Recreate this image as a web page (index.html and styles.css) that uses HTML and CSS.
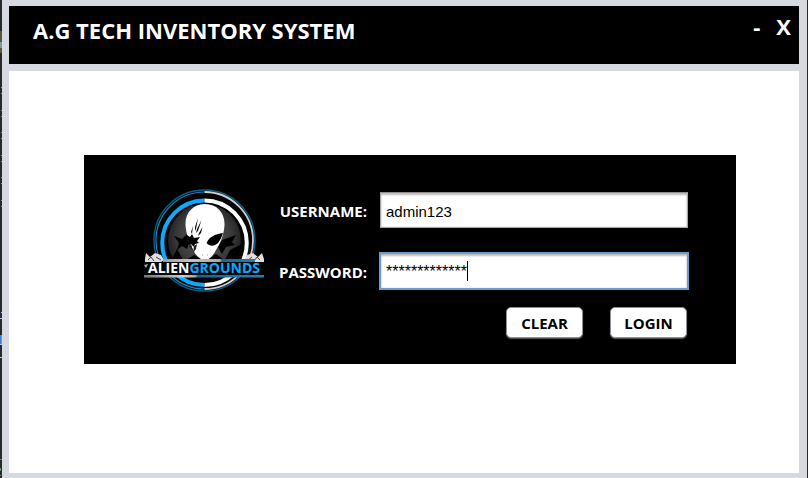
FILE: index.html
```html
<!DOCTYPE html>
<html lang="en">
<head>
<meta charset="utf-8">
<title>A.G Tech Inventory System</title>
<link rel="stylesheet" href="styles.css">
</head>
<body>
<svg class="backdrop" width="2" height="478" aria-hidden="true">
  <rect width="2" height="478" fill="#29292b"/>
  <rect y="31" width="2" height="22" fill="#5c563f"/>
  <rect y="42" width="2" height="6" fill="#7f9b92"/>
  <path d="M1 87h1v1h-1zM1 93h1v1h-1zM1 155h1v1h-1zM1 161h1v1h-1zM1 177h1v1h-1zM1 183h1v1h-1z" fill="#9a9170"/>
  <path d="M1 110h1v1h-1zM1 116h1v1h-1zM1 132h1v1h-1zM1 138h1v1h-1zM1 200h1v1h-1zM1 206h1v1h-1z" fill="#b58742"/>
  <path d="M1 312h1v1h-1zM0 318h2v1h-2zM0 344h2v1h-2zM0 357h2v1h-2z" fill="#a9c6f0"/>
  <rect y="335" width="1" height="9" fill="#3b7dd0"/>
  <rect x="1" y="335" width="1" height="9" fill="#a48e7a"/>
  <rect y="459" width="2" height="1" fill="#777"/>
  <rect y="468" width="1" height="3" fill="#6d936d"/>
  <rect y="475" width="1" height="1" fill="#a57b4d"/>
</svg>
<div class="window">
  <header class="titlebar">
    <h1 class="title">A.G TECH INVENTORY SYSTEM</h1>
    <div class="controls">
      <button class="control" type="button" aria-label="Minimize">-</button>
      <button class="control" type="button" aria-label="Close">X</button>
    </div>
  </header>
  <main class="content">
    <section class="panel">
      <svg class="logo" viewBox="8 5 120 104" role="img" aria-label="Alien Grounds">
        <defs>
          <radialGradient id="disc" cx=".5" cy=".45" r=".55">
            <stop offset="0" stop-color="#5a5a5a"/>
            <stop offset=".65" stop-color="#3c3c3c"/>
            <stop offset="1" stop-color="#1a1a1a"/>
          </radialGradient>
          <linearGradient id="steel" x1="0" x2="1">
            <stop offset="0" stop-color="#9c9999"/>
            <stop offset=".3" stop-color="#c8c2c0"/>
            <stop offset=".62" stop-color="#aaa6a5"/>
            <stop offset=".64" stop-color="#126693"/>
            <stop offset="1" stop-color="#2b7fae"/>
          </linearGradient>
          <linearGradient id="steel-low" x1="0" x2="1">
            <stop offset="0" stop-color="#777"/>
            <stop offset=".32" stop-color="#d2cac8"/>
            <stop offset=".42" stop-color="#b0aaa8"/>
            <stop offset=".45" stop-color="#126693"/>
            <stop offset="1" stop-color="#2b7fae"/>
          </linearGradient>
        </defs>
        <circle cx="68.500" cy="56.500" r="50.500" fill="none" stroke="#0c5a86" stroke-width="1.500"/>
        <path d="M68.500 8A48.500 48.500 0 0 0 68.500 105" fill="none" stroke="#1983b8" stroke-width="1.200"/>
        <path d="M68.500 8A48.500 48.500 0 0 1 68.500 105" fill="none" stroke="#d6cccc" stroke-width="1.800"/>
        <circle cx="68.500" cy="56.500" r="46" fill="#030303"/>
        <path d="M68.500 16.500A40 40 0 0 0 68.500 101" fill="none" stroke="#09aaff" stroke-width="4"/>
        <path d="M68.500 16.500A40 40 0 0 1 68.500 101" fill="none" stroke="#fff" stroke-width="4"/>
        <circle cx="68.500" cy="56.500" r="36.500" fill="url(#disc)"/>
        <path d="M36 75L41 65L47 76zM89 76L94 66L106 60L102 76zM58 71L69 77L80 70L88 76H50z" fill="#000"/>
        <path d="M38 52L46 55L51 50L53 59L51 65L46 62L41 66L43 59zM86 56L100 51L96 58L99 61L90 63L86 70L82 63z" fill="#000"/>
        <path d="M69 20C57 20 49 29 49.500 41C50 50 53 58 57 66C60 72 65 76 69 76C73 76 77 72 80 66C85 58 88 50 88.500 41C89 29 81 20 69 20z" fill="#fff"/>
        <path d="M49.500 50L54 53L56 50L58 54L64 53L61 57L63 59L59 60L58 63L55 60L52 61L53 58zM87 49C79 50 73 53 70.500 59C74 63 79 62 82 59C84 56 86 53 87 49z" fill="#000"/>
        <path d="M62 34L59 43L59 47L60 45zM65.500 36L61 45L60 49L62 47zM66.500 43L63 49L62 52L65 49zM57 42L55 48L56 50z" fill="#111"/>
        <path d="M53 62L55 60L57 66L55 65zM58 62L61 60L60 65L57 69z" fill="#222"/>
        <path d="M66 71h1M71 71h1" stroke="#999"/>
        <path d="M9 75L10 69L14 73L19 69L25 71L28 76L25 78H9zM128 75L126 69L122 73L117 69L111 71L108 76L112 78H128z" fill="#e2dcdd"/>
        <path d="M12 76L15 73L18 77M20 73L25 76M124 76L121 73L118 77M116 73L111 77" fill="none" stroke="#444"/>
        <rect x="8" y="78" width="120" height="13" fill="#020609"/>
        <rect x="27" y="75" width="92" height="3" fill="url(#steel)"/>
        <rect x="8" y="91" width="120" height="2.500" fill="url(#steel-low)"/>
        <path d="M8 81L12 80L10 84z" fill="#aaa"/>
        <text x="12" y="89" class="logo-text" fill="#fff">ALIEN<tspan fill="#09aaff">GROUNDS</tspan></text>
      </svg>
      <form class="login">
        <label class="label" for="username">USERNAME:</label>
        <div class="field"><input class="input" id="username" type="text" value="admin123"></div>
        <label class="label" for="password">PASSWORD:</label>
        <div class="field">
          <input class="input input-active" id="password" type="text" autocomplete="off" value="*************">
          <span class="caret"></span>
        </div>
        <div class="actions">
          <button class="button" type="reset">CLEAR</button>
          <button class="button" type="button">LOGIN</button>
        </div>
      </form>
    </section>
  </main>
</div>
</body>
</html>
```
FILE: styles.css
```css
* {
  box-sizing: border-box;
}

body {
  margin: 0;
  min-height: 100vh;
  display: flex;
  background: #29292b;
  font-family: "Open Sans", "Noto Sans", sans-serif;
}

.backdrop {
  flex: none;
  display: block;
}

.window {
  flex: 1;
  display: flex;
  flex-direction: column;
  gap: 7px;
  margin-right: 1px;
  padding: 6px 8px 5px 7px;
  background: #d6d9e0;
}

.titlebar {
  display: flex;
  justify-content: space-between;
  align-items: flex-start;
  height: 58px;
  padding: 8px 8px 0 24px;
  background: #000;
  color: #fff;
}

.title {
  margin: 0;
  font-size: 22px;
  line-height: 32px;
  font-weight: 700;
}

.controls {
  display: flex;
  gap: 16px;
}

.control {
  padding: 0;
  border: 0;
  background: none;
  color: #fff;
  font: 700 22px/24px "Open Sans", "Noto Sans", sans-serif;
}

.content {
  flex: 1;
  padding: 84px 63px 0 75px;
  background: #fff;
}

.panel {
  display: flex;
  align-items: flex-start;
  gap: 15px;
  padding: 34px 48px 26px 60px;
  background: #000;
}

.logo {
  flex: none;
  width: 120px;
  height: 104px;
}

.logo-text {
  font: 700 14px "Open Sans", "Noto Sans", sans-serif;
}

.login {
  flex: 1;
  display: grid;
  grid-template-columns: 88px 1fr;
  column-gap: 13px;
  row-gap: 25px;
  align-items: center;
  padding-top: 3px;
}

.label {
  padding-top: 2px;
  color: #fff;
  font-size: 15px;
  line-height: 20px;
  font-weight: 700;
  text-align: right;
}

.field {
  position: relative;
}

.input {
  display: block;
  width: 100%;
  height: 36px;
  padding: 2px 5px 0;
  border: 1px solid #a8a8a8;
  border-top-color: #8f8f8f;
  border-radius: 0;
  outline: 0;
  background: #fff;
  box-shadow: inset 0 2px 2px #bbb, inset 0 0 2px #ccc;
  color: #000;
  font: 15px "Liberation Sans", sans-serif;
}

.input-active {
  outline: 2px solid #6f9bc8;
  outline-offset: -1px;
  font-size: 16px;
}

.caret {
  position: absolute;
  left: 87px;
  top: 8px;
  width: 1px;
  height: 20px;
  background: #000;
}

.actions {
  grid-column: 1 / -1;
  display: flex;
  justify-content: flex-end;
  gap: 27px;
  margin-top: -7px;
  padding-right: 1px;
}

.button {
  width: 77px;
  height: 31px;
  padding: 0;
  border: 1px solid #8b8e94;
  border-radius: 5px;
  background: #fff;
  box-shadow: 0 1px 1px #55585e;
  color: #000;
  font: 700 15px/20px "Open Sans", "Noto Sans", sans-serif;
}
```
